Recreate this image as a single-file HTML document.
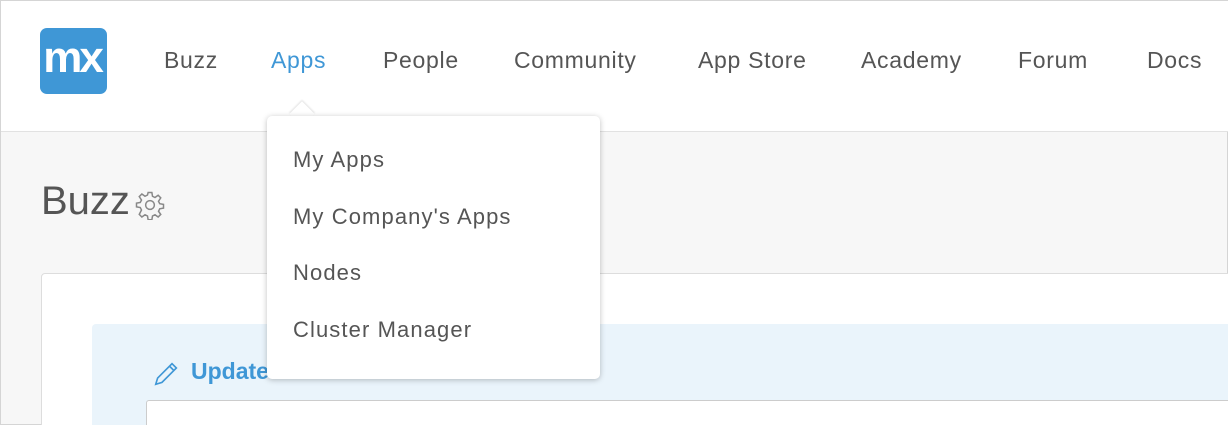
<!DOCTYPE html>
<html style="overflow:hidden;width:1228px;height:425px"><head><style>
*{margin:0;padding:0;box-sizing:border-box}
body{width:1228px;height:425px;overflow:hidden;background:#f7f7f7;font-family:"Liberation Sans",sans-serif;position:relative;border:1px solid #d5d5d5}
.hdr{position:absolute;left:0;top:0;width:1228px;height:131px;background:#fff;border-bottom:1px solid #e2e2e2}
.logo{position:absolute;left:39px;top:27px;width:67px;height:66px;background:#3f97d6;border-radius:7px;color:#fff;font-weight:bold;font-size:44px;letter-spacing:-3px;text-align:center;line-height:60px;text-indent:-3px}
.nav{position:absolute;top:46px;font-size:23px;color:#555;letter-spacing:0.7px}
.abs{position:absolute}
.dd{position:absolute;left:266px;top:115px;width:333px;height:263px;background:#fff;border-radius:5px;box-shadow:0 1px 6px rgba(0,0,0,.25)}
.dd div{position:absolute;left:26px;font-size:22px;color:#555;letter-spacing:1.1px}
</style></head><body>
<div class="hdr">
<div class="logo">mx</div>
<div class="nav" style="left:163px">Buzz</div>
<div class="nav" style="left:270px;color:#3f97d6">Apps</div>
<div class="nav" style="left:382px">People</div>
<div class="nav" style="left:513px">Community</div>
<div class="nav" style="left:697px">App Store</div>
<div class="nav" style="left:860px">Academy</div>
<div class="nav" style="left:1017px">Forum</div>
<div class="nav" style="left:1146px">Docs</div>
</div>
<div class="abs" style="left:40px;top:178px;font-size:40px;color:#555">Buzz</div>
<svg class="abs" style="left:134px;top:189px" width="30" height="30" viewBox="0 0 24 24" fill="none" stroke="#888" stroke-width="1.2"><circle cx="12" cy="12" r="3.5"/><path d="M10.5 2h3l.5 3 2 1 2.5-1.8 2.1 2.1L18.8 9l1 2 3 .5v3l-3 .5-1 2 1.8 2.5-2.1 2.1-2.5-1.8-2 1-.5 3h-3l-.5-3-2-1-2.5 1.8-2.1-2.1L5.2 16l-1-2-3-.5v-3l3-.5 1-2L3.4 5.3l2.1-2.1L8 5l2-1z"/></svg>
<div class="abs" style="left:40px;top:272px;width:1200px;height:160px;background:#fff;border:1px solid #ddd;border-radius:4px"></div>
<div class="abs" style="left:91px;top:323px;width:1150px;height:110px;background:#eaf4fb;border-radius:4px"></div>
<svg class="abs" style="left:151px;top:357px" width="30" height="30" viewBox="0 0 24 24" fill="none" stroke="#3f97d6" stroke-width="1.3"><path d="M3 21l1.5-5L16 4.5l3.5 3.5L8 19.5z M14 6.5l3.5 3.5"/></svg>
<div class="abs" style="left:190px;top:357px;font-size:23px;font-weight:bold;color:#3f97d6">Update</div>
<div class="abs" style="left:145px;top:399px;width:1100px;height:40px;background:#fff;border:1px solid #ccc;border-radius:3px"></div>
<div class="abs" style="left:292px;top:104px;width:18px;height:18px;background:#fff;transform:rotate(45deg);box-shadow:-1px -1px 2px rgba(0,0,0,.12)"></div>
<div class="dd">
<div style="top:31px">My Apps</div>
<div style="top:88px">My Company's Apps</div>
<div style="top:144px">Nodes</div>
<div style="top:201px">Cluster Manager</div>
</div>
</body></html>
